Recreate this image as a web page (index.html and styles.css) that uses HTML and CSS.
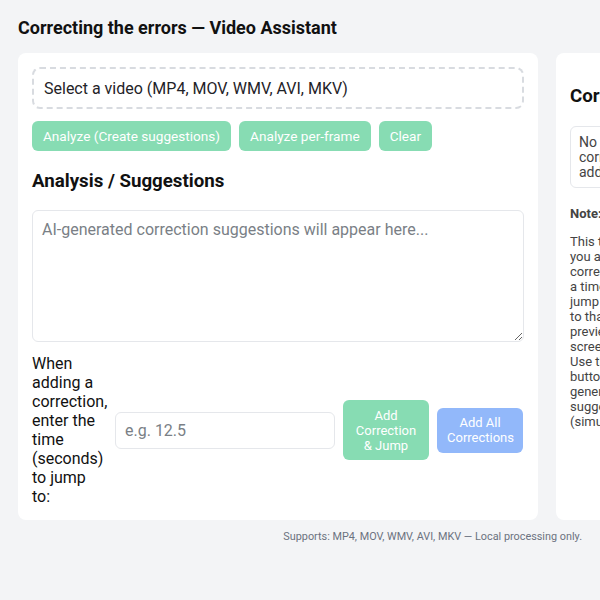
FILE: index.html
```html
<!DOCTYPE html>
<html lang="en">
<head>
<meta charset="utf-8">
<title>Correcting the errors — Video Assistant</title>
<link rel="stylesheet" href="styles.css">
</head>
<body>
<div class="page">
  <h1 class="title">Correcting the errors — Video Assistant</h1>
  <div class="layout">
    <section class="card main">
      <div class="dropzone">Select a video (MP4, MOV, WMV, AVI, MKV)</div>
      <div class="btn-row">
        <button class="btn green" disabled>Analyze (Create suggestions)</button>
        <button class="btn green" disabled>Analyze per-frame</button>
        <button class="btn green" disabled>Clear</button>
      </div>
      <h2 class="section-title">Analysis / Suggestions</h2>
      <textarea class="suggestions" placeholder="AI-generated correction suggestions will appear here..."></textarea>
      <div class="jump-row">
        <label class="jump-label" for="t">When adding a correction, enter the time (seconds) to jump to:</label>
        <input id="t" class="time-input" type="text" placeholder="e.g. 12.5">
        <button class="btn green tall" disabled>Add Correction &amp; Jump</button>
        <button class="btn blue tall" disabled>Add All Corrections</button>
      </div>
    </section>
    <aside class="card side">
      <h3 class="side-title">Corrections</h3>
      <div class="empty">No corrections added.</div>
      <div class="note-title">Note:</div>
      <p class="note">This tool lets<br>you add<br>corrections<br>a time to<br>jump<br>to that point<br>preview<br>screen.<br>Use the<br>buttons to<br>generate<br>suggestions<br>(simulated).</p>
    </aside>
  </div>
  <div class="footer">Supports: MP4, MOV, WMV, AVI, MKV — Local processing only.</div>
</div>
</body>
</html>
```
FILE: styles.css
```css
html, body {
  margin: 0;
  padding: 0;
  overflow: hidden;
}
body {
  background: #f3f4f6;
  font-family: Roboto, "Liberation Sans", sans-serif;
  color: #111827;
}
.page {
  width: 564px;
  padding: 18px;
}
.title {
  margin: 0;
  font-size: 18px;
  line-height: 20px;
  font-weight: 700;
  color: #111;
}
.layout {
  display: flex;
  gap: 18px;
  margin-top: 15px;
  align-items: stretch;
}
.card {
  background: #fff;
  border-radius: 8px;
  padding: 14px;
  flex: none;
}
.main {
  width: 492px;
}
.side {
  width: 100px;
}
.dropzone {
  height: 42px;
  box-sizing: border-box;
  border: 2px dashed #d8dbe0;
  border-radius: 8px;
  padding: 0 10px;
  display: flex;
  align-items: center;
  font-size: 16px;
  color: #1f2328;
}
.btn-row {
  display: flex;
  gap: 8px;
  margin-top: 12px;
}
.btn {
  font-family: inherit;
  border: 0;
  border-radius: 6px;
  color: #fff;
  font-size: 13.6px;
  height: 30px;
  padding: 0 11px;
}
.green {
  background: #87dcb3;
}
.blue {
  background: #92b8fa;
}
.section-title {
  margin: 19px 0 18px;
  font-size: 18.7px;
  line-height: 22px;
  font-weight: 700;
  color: #111;
}
.suggestions {
  display: block;
  width: 100%;
  height: 132px;
  box-sizing: border-box;
  border: 1px solid #e5e7eb;
  border-radius: 6px;
  padding: 9px 9px;
  font-family: inherit;
  font-size: 16px;
  line-height: 19px;
  color: #111;
  margin: 0;
}
.suggestions::placeholder,
.time-input::placeholder {
  color: #7a7f86;
}
.jump-row {
  display: flex;
  align-items: center;
  gap: 8px;
  margin-top: 12px;
}
.jump-label {
  width: 75px;
  flex: none;
  font-size: 16px;
  line-height: 19px;
  color: #111;
}
.time-input {
  width: 220px;
  height: 37px;
  box-sizing: border-box;
  flex: none;
  border: 1px solid #e5e7eb;
  border-radius: 6px;
  padding: 0 9px;
  font-family: inherit;
  font-size: 16px;
  margin: 0;
}
.tall {
  width: 86px;
  height: auto;
  flex: none;
  font-size: 13px;
  line-height: 15px;
  padding: 7.5px 10px;
}
.side-title {
  margin: 18px 0 19px;
  font-size: 18.7px;
  line-height: 22px;
  font-weight: 700;
  color: #111;
  white-space: nowrap;
}
.empty {
  width: 64px;
  border: 1px solid #e5e7eb;
  border-radius: 6px;
  padding: 7.5px 8px;
  font-size: 14px;
  line-height: 15px;
  color: #444;
}
.note-title {
  margin-top: 18px;
  font-size: 13px;
  line-height: 15px;
  font-weight: 700;
  color: #444;
}
.note {
  margin: 13px 0 0;
  font-size: 13px;
  line-height: 15px;
  color: #444;
  white-space: nowrap;
}
.footer {
  margin-top: 10px;
  text-align: right;
  font-size: 10.85px;
  line-height: 14px;
  color: #6b7280;
}
```
